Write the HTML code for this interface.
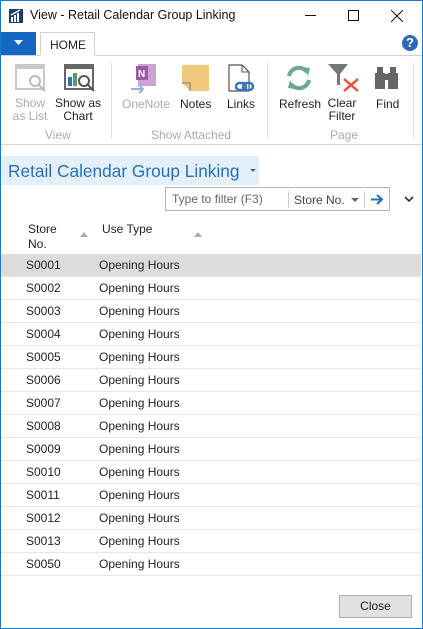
<!DOCTYPE html>
<html><head><style>
*{margin:0;padding:0;box-sizing:border-box}
body{width:423px;height:629px;overflow:hidden;background:#fff;font-family:"Liberation Sans",sans-serif;font-size:12px;color:#222;position:relative}
.frame{position:absolute;inset:0;border:1px solid #1979ca;}
.abs{position:absolute}
.t{white-space:nowrap}
.row{position:absolute;left:1px;width:420px;height:23px;border-bottom:1px solid #e6e6e6}
.row span{position:absolute;top:4px}
</style></head><body>
<div class="frame"></div>
<svg class="abs" style="left:9px;top:9px" width="14" height="14"><rect width="14" height="14" fill="#1d3c6e"/><rect x="2" y="8" width="2" height="5" fill="#fff"/><rect x="5" y="6" width="2" height="7" fill="#fff"/><rect x="8" y="4" width="2" height="9" fill="#fff"/><path d="M2 6 L11 1" stroke="#fff" stroke-width="1.3"/></svg>
<div class="abs t" style="left:30px;top:8px;font-size:12.5px;color:#111">View - Retail Calendar Group Linking</div>
<div class="abs" style="left:305px;top:15px;width:11px;height:1px;background:#111"></div>
<div class="abs" style="left:348px;top:10px;width:11px;height:11px;border:1px solid #111"></div>
<svg class="abs" style="left:391px;top:10px" width="12" height="12"><path d="M0 0L12 12M12 0L0 12" stroke="#111" stroke-width="1"/></svg>
<div class="abs" style="left:1px;top:32px;width:35px;height:23px;background:#1566c0"></div>
<svg class="abs" style="left:14px;top:40px" width="9" height="5"><path d="M0 0H9L4.5 5Z" fill="#fff"/></svg>
<div class="abs" style="left:40px;top:32px;width:55px;height:24px;border:1px solid #d0d0d0;border-bottom:none;background:#fff"></div>
<div class="abs t" style="left:50px;top:38px;font-size:12px">HOME</div>
<div class="abs" style="left:1px;top:55px;width:421px;height:1px;background:#d0d0d0"></div>
<div class="abs" style="left:40px;top:55px;width:55px;height:1px;background:#fff"></div>
<div class="abs" style="left:402px;top:35px;width:16px;height:16px;border-radius:50%;background:#2a6bb4;color:#fff;font-weight:bold;font-size:13px;text-align:center;line-height:16px">?</div>
<div class="abs" style="left:1px;top:144px;width:421px;height:1px;background:#d6d6d6"></div>
<div class="abs" style="left:111px;top:63px;width:1px;height:75px;background:#ddd"></div>
<div class="abs" style="left:267px;top:63px;width:1px;height:75px;background:#ddd"></div>
<div class="abs" style="left:413px;top:63px;width:1px;height:75px;background:#ddd"></div>
<svg class="abs" style="left:15px;top:64px" width="32" height="30"><rect x="1" y="1" width="28" height="24" fill="none" stroke="#c8c8c8" stroke-width="2"/><rect x="1" y="1" width="28" height="4" fill="#c8c8c8"/><circle cx="20" cy="17" r="5" fill="#fff" stroke="#bbb" stroke-width="2"/><path d="M24 21L30 27" stroke="#bbb" stroke-width="2"/></svg>
<svg class="abs" style="left:64px;top:64px" width="32" height="30"><rect x="1" y="1" width="28" height="24" fill="none" stroke="#666" stroke-width="2"/><rect x="1" y="1" width="28" height="4" fill="#666"/><rect x="4" y="13" width="4" height="9" fill="#3a6fb0"/><rect x="9" y="9" width="4" height="13" fill="#5a9a7a"/><circle cx="20" cy="17" r="5" fill="#fff" stroke="#555" stroke-width="2"/><path d="M24 21L30 27" stroke="#555" stroke-width="2"/></svg>
<svg class="abs" style="left:130px;top:63px" width="30" height="32"><rect x="8" y="1" width="18" height="22" fill="#c9a4d0"/><rect x="6" y="3" width="12" height="14" fill="#9b5aa8"/><text x="8" y="14" font-size="10" fill="#fff" font-family="Liberation Sans" font-weight="bold">N</text><path d="M1 26H12M9 22L13 26L9 30" stroke="#8fb3d9" stroke-width="2" fill="none"/></svg>
<svg class="abs" style="left:181px;top:64px" width="30" height="28"><path d="M1 1H28V27H9L1 19Z" fill="#f0c97e"/><path d="M1 19H9V27" fill="none" stroke="#777" stroke-width="1"/></svg>
<svg class="abs" style="left:227px;top:64px" width="30" height="30"><path d="M2 1H15L22 8V27H2Z" fill="#fff" stroke="#555" stroke-width="1.2"/><path d="M15 1V8H22" fill="none" stroke="#555"/><rect x="9" y="19" width="10" height="7" rx="3.5" fill="none" stroke="#3a74b8" stroke-width="2.5"/><rect x="16" y="19" width="10" height="7" rx="3.5" fill="none" stroke="#3a74b8" stroke-width="2.5"/></svg>
<svg class="abs" style="left:285px;top:64px" width="28" height="28"><path d="M4 12A10 10 0 0 1 22 8" stroke="#6aa890" stroke-width="4" fill="none"/><path d="M18 3L25 4L23 12Z" fill="#6aa890"/><path d="M24 16A10 10 0 0 1 6 20" stroke="#6aa890" stroke-width="4" fill="none"/><path d="M10 25L3 24L5 16Z" fill="#6aa890"/></svg>
<svg class="abs" style="left:328px;top:63px" width="32" height="30"><path d="M0 1H20L12 11V22L9 22V11Z" fill="#777"/><path d="M16 16L30 28M30 16L16 28" stroke="#e05a40" stroke-width="2.5"/></svg>
<svg class="abs" style="left:373px;top:65px" width="28" height="26"><rect x="2" y="8" width="10" height="16" fill="#666"/><rect x="15" y="8" width="10" height="16" fill="#666"/><rect x="4" y="2" width="6" height="8" fill="#666"/><rect x="17" y="2" width="6" height="8" fill="#666"/><rect x="11" y="9" width="5" height="6" fill="#666"/></svg>
<div class="abs" style="left:5px;top:97px;width:50px;text-align:center;color:#aaa;line-height:13px">Show<br>as List</div>
<div class="abs" style="left:53px;top:97px;width:50px;text-align:center;line-height:13px">Show as<br>Chart</div>
<div class="abs t" style="left:122px;top:97px;color:#aaa">OneNote</div>
<div class="abs t" style="left:180px;top:97px">Notes</div>
<div class="abs t" style="left:227px;top:97px">Links</div>
<div class="abs t" style="left:279px;top:97px">Refresh</div>
<div class="abs" style="left:322px;top:97px;width:40px;text-align:center;line-height:13px">Clear<br>Filter</div>
<div class="abs t" style="left:376px;top:97px">Find</div>
<div class="abs t" style="left:45px;top:128px;color:#aaa">View</div>
<div class="abs t" style="left:151px;top:128px;color:#aaa">Show Attached</div>
<div class="abs t" style="left:330px;top:128px;color:#aaa">Page</div>
<div class="abs" style="left:1px;top:156px;width:258px;height:29px;background:#e3f0fa"></div>
<div class="abs t" style="left:8px;top:161px;font-size:17.3px;color:#2a6fb5">Retail Calendar Group Linking</div>
<svg class="abs" style="left:250px;top:169px" width="6" height="4"><path d="M0 0H6L3 3Z" fill="#666"/></svg>
<div class="abs" style="left:165px;top:187px;width:225px;height:24px;border:1px solid #b5b5b5;background:#fff"></div>
<div class="abs t" style="left:172px;top:192px;color:#666">Type to filter (F3)</div>
<div class="abs" style="left:288px;top:191px;width:1px;height:17px;background:#ccc"></div>
<div class="abs t" style="left:294px;top:193px;color:#444">Store No.</div>
<svg class="abs" style="left:351px;top:198px" width="8" height="4"><path d="M0 0H8L4 4Z" fill="#666"/></svg>
<div class="abs" style="left:364px;top:191px;width:1px;height:17px;background:#ccc"></div>
<svg class="abs" style="left:370px;top:194px" width="14" height="11"><path d="M1 5.5H12M7 1L12 5.5L7 10" stroke="#2a6fb5" stroke-width="2" fill="none"/></svg>
<svg class="abs" style="left:404px;top:196px" width="10" height="6"><path d="M1 1L5 5L9 1" stroke="#333" stroke-width="1.6" fill="none"/></svg>
<div class="abs" style="left:28px;top:222px;line-height:15px">Store<br>No.</div>
<svg class="abs" style="left:80px;top:232px" width="8" height="5"><path d="M0 5H8L4 0Z" fill="#aaa"/></svg>
<div class="abs t" style="left:102px;top:222px">Use Type</div>
<svg class="abs" style="left:194px;top:232px" width="8" height="5"><path d="M0 5H8L4 0Z" fill="#aaa"/></svg>
<div class="row" style="top:254px;background:#dcdcdc"><span style="left:25px">S0001</span><span style="left:98px">Opening Hours</span></div>
<div class="row" style="top:277px"><span style="left:25px">S0002</span><span style="left:98px">Opening Hours</span></div>
<div class="row" style="top:300px"><span style="left:25px">S0003</span><span style="left:98px">Opening Hours</span></div>
<div class="row" style="top:323px"><span style="left:25px">S0004</span><span style="left:98px">Opening Hours</span></div>
<div class="row" style="top:346px"><span style="left:25px">S0005</span><span style="left:98px">Opening Hours</span></div>
<div class="row" style="top:369px"><span style="left:25px">S0006</span><span style="left:98px">Opening Hours</span></div>
<div class="row" style="top:392px"><span style="left:25px">S0007</span><span style="left:98px">Opening Hours</span></div>
<div class="row" style="top:415px"><span style="left:25px">S0008</span><span style="left:98px">Opening Hours</span></div>
<div class="row" style="top:438px"><span style="left:25px">S0009</span><span style="left:98px">Opening Hours</span></div>
<div class="row" style="top:461px"><span style="left:25px">S0010</span><span style="left:98px">Opening Hours</span></div>
<div class="row" style="top:484px"><span style="left:25px">S0011</span><span style="left:98px">Opening Hours</span></div>
<div class="row" style="top:507px"><span style="left:25px">S0012</span><span style="left:98px">Opening Hours</span></div>
<div class="row" style="top:530px"><span style="left:25px">S0013</span><span style="left:98px">Opening Hours</span></div>
<div class="row" style="top:553px"><span style="left:25px">S0050</span><span style="left:98px">Opening Hours</span></div>
<div class="abs" style="left:339px;top:595px;width:73px;height:23px;border:1px solid #adadad;background:#e1e1e1;text-align:center;line-height:21px">Close</div>
</body></html>
